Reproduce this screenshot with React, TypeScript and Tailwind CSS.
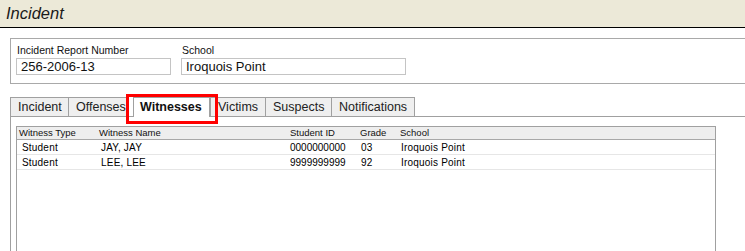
import React from "react";

const font = { fontFamily: '"Liberation Sans", Arial, sans-serif' };

type Tab = { label: string; w: string; selected?: boolean; extra?: string };

const tabs: Tab[] = [
  { label: "Incident", w: "w-[58px]" },
  { label: "Offenses", w: "w-[61px]", extra: "border-r" },
  { label: "Witnesses", w: "w-[77px]", selected: true, extra: "ml-[4px]" },
  { label: "Victims", w: "w-[55px]" },
  { label: "Suspects", w: "w-[66px]" },
  { label: "Notifications", w: "w-[84px]", extra: "border-r" },
];

const rows = [
  { type: "Student", name: "JAY, JAY", id: "0000000000", grade: "03", school: "Iroquois Point" },
  { type: "Student", name: "LEE, LEE", id: "9999999999", grade: "92", school: "Iroquois Point" },
];

export default function App() {
  return (
    <div
      className="relative w-[745px] h-[251px] overflow-hidden bg-white text-black"
      style={font}
    >
      {/* Title bar */}
      <div className="h-[28px] bg-[#ECE9D8] border-b border-black px-[6px]">
        <span className="italic text-[16.5px] leading-[27px] text-[#1a1a1a]">Incident</span>
      </div>

      {/* Header fields box */}
      <div className="mt-[10px] ml-[10px] w-[760px] h-[46px] border border-[#a9a9a9] px-[5px] pt-[5px] flex gap-[10px]">
        <div className="flex flex-col">
          <div className="pl-[1px] text-[10.5px] leading-[13px] h-[13px] text-[#111]">Incident Report Number</div>
          <div className="mt-[1px] w-[155px] h-[17px] border border-[#c4c4c4] px-[4px] text-[13px] leading-[15px] text-[#111]">
            256-2006-13
          </div>
        </div>
        <div className="flex flex-col">
          <div className="pl-[1px] text-[10.5px] leading-[13px] h-[13px] text-[#111]">School</div>
          <div className="mt-[1px] w-[225px] h-[17px] border border-[#c4c4c4] px-[4px] text-[13px] leading-[15px] text-[#111]">
            Iroquois Point
          </div>
        </div>
      </div>

      {/* Tabs */}
      <div className="mt-[13px] ml-[10px] flex items-end h-[19px]">
        {tabs.map((t) =>
          t.selected ? (
            <div
              key={t.label}
              className={`${t.w} ${t.extra ?? ""} relative z-10 h-[20px] -mb-px bg-white border-t border-l border-r border-[#a0a0a0] pl-[6px] text-[12.5px] leading-[19px] font-bold text-[#111]`}
            >
              {t.label}
            </div>
          ) : (
            <div
              key={t.label}
              className={`${t.w} ${t.extra ?? ""} h-[19px] bg-[#efefef] border-t border-l border-[#a0a0a0] pl-[7px] text-[12.5px] leading-[19px] text-[#222]`}
            >
              {t.label}
            </div>
          )
        )}
      </div>

      {/* Tab panel */}
      <div className="ml-[10px] w-[760px] h-[140px] border-t border-l border-[#a0a0a0] pt-[9px] pl-[5px]">
        <div className="w-[700px] h-[140px] border border-[#a0a0a0]">
          <div className="grid grid-cols-[80px_191px_70px_40px_1fr] h-[13px] bg-[#eeeeee] border-b border-[#a8a8a8] text-[9.5px] leading-[12px] text-[#111]">
            <div className="pl-[2px]">Witness Type</div>
            <div className="pl-[2px]">Witness Name</div>
            <div className="pl-[2px]">Student ID</div>
            <div className="pl-[2px]">Grade</div>
            <div className="pl-[2px]">School</div>
          </div>
          {rows.map((r, i) => (
            <div
              key={i}
              className="grid grid-cols-[80px_191px_70px_40px_1fr] h-[15px] border-b border-[#e6e6e6] pt-[1px] text-[10px] leading-[13px] tracking-[0.2px] text-black"
            >
              <div className="pl-[5px]">{r.type}</div>
              <div className="pl-[4px]">{r.name}</div>
              <div className="pl-[2px] tracking-normal">{r.id}</div>
              <div className="pl-[3px]">{r.grade}</div>
              <div className="pl-[3px]">{r.school}</div>
            </div>
          ))}
        </div>
      </div>

      {/* Red highlight annotation */}
      <div className="absolute left-[126px] top-[94px] w-[92px] h-[30px] border-[3px] border-[#ff0000] z-20" />
    </div>
  );
}
